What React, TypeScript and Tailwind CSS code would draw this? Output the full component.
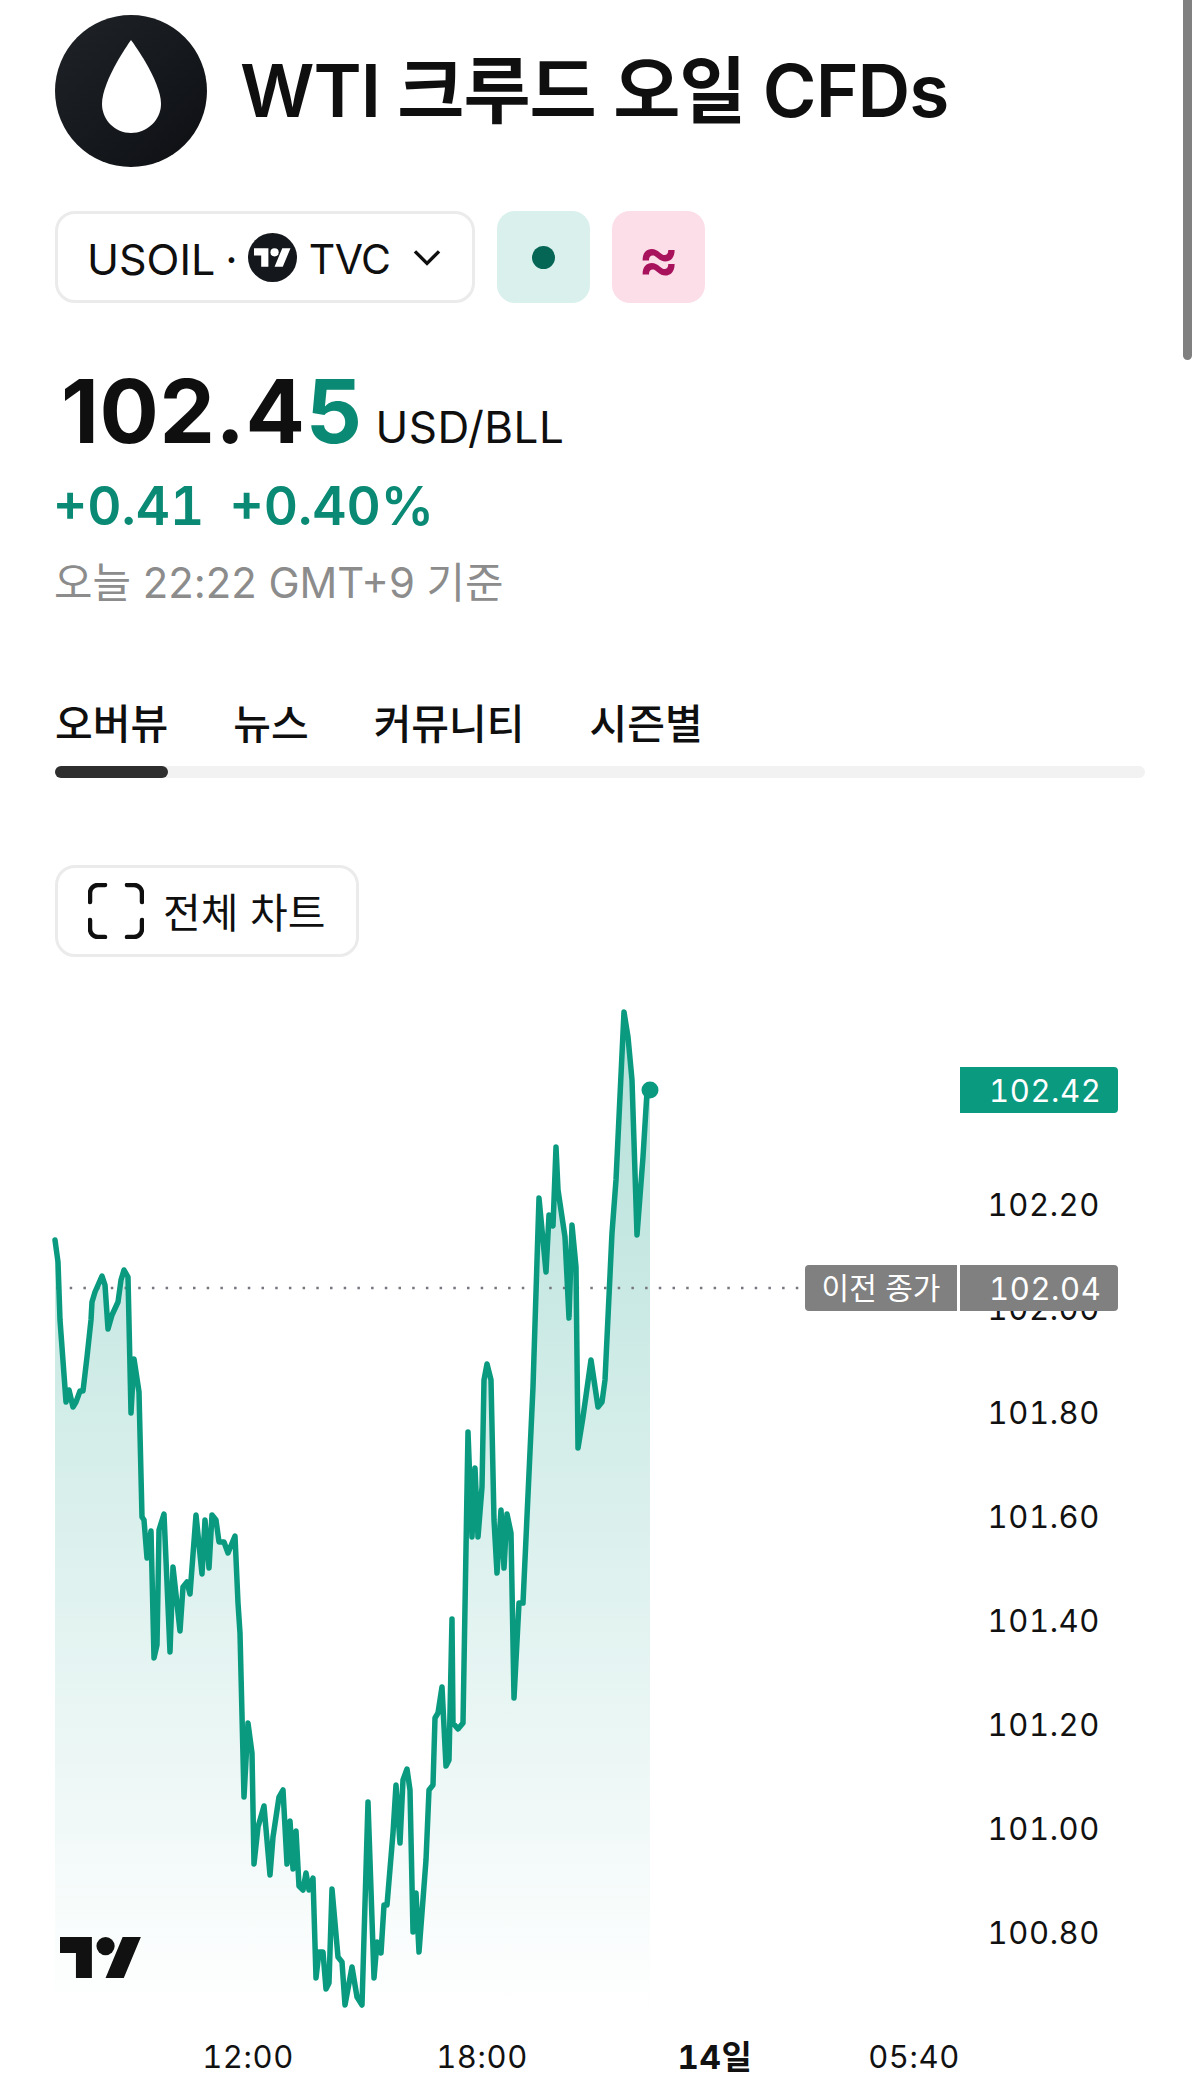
import React from "react";

const pts = "55,1240 58,1262 60,1320 66,1402 69,1390 73,1407 76,1402 80,1391 83,1391 87,1357 91,1320 92,1302 95,1292 102,1276 105,1285 108,1329 112,1315 118,1302 121,1280 124,1270 128,1277 131,1413 134,1359 139,1392 142,1517 144,1520 147,1558 151,1531 154,1658 157,1645 159,1530 164,1514 170,1652 173,1567 180,1631 183,1587 187,1582 190,1594 196,1515 202,1574 205,1520 209,1568 212,1515 216,1520 219,1542 224,1542 228,1553 235,1536 238,1603 240,1633 244,1797 248,1723 252,1753 254,1864 258,1827 264,1806 270,1875 273,1837 279,1797 283,1790 287,1864 290,1821 293,1869 296,1831 299,1886 303,1890 306,1873 309,1890 313,1878 316,1978 319,1952 323,1952 326,1989 329,1983 332,1889 338,1957 342,1962 345,2005 352,1967 357,1997 362,2005 368,1802 374,1978 377,1942 381,1953 384,1905 387,1905 393,1833 396,1785 400,1843 403,1780 407,1769 410,1790 413,1932 416,1893 419,1952 426,1860 429,1790 433,1785 435,1718 438,1713 442,1687 446,1766 449,1760 452,1619 453,1723 458,1729 463,1723 468,1432 472,1537 475,1468 478,1537 482,1487 484,1380 487,1364 491,1380 494,1520 497,1573 501,1510 504,1568 507,1514 511,1533 514,1698 519,1603 523,1603 533,1387 539,1198 546,1272 549,1215 553,1226 556,1147 558,1190 565,1237 569,1318 572,1225 576,1267 578,1448 583,1417 591,1360 598,1407 602,1402 605,1380 612,1233 616,1180 624,1012 628,1037 632,1080 637,1235 643,1157 647,1092 650,1090";

const ticks = ["102.20", "102.00", "101.80", "101.60", "101.40", "101.20", "101.00", "100.80"];
const font = { fontFamily: 'Inter, "Noto Sans CJK KR", "Liberation Sans", sans-serif' };

function TvMark({ className, fill }: { className: string; fill: string }) {
  return (
    <svg viewBox="0 4 36 18" className={className} fill={fill}>
      <path d="M14 22H7V11H0V4h14v18zM28 22h-8l7.5-18h8L28 22z" />
      <circle cx="20" cy="8" r="4" />
    </svg>
  );
}

export default function App() {
  return (
    <div className="relative w-[1200px] h-[2094px] overflow-hidden bg-white text-[#0f0f0f]" style={font}>
      <div className="absolute right-[8px] top-0 w-[9px] h-[360px] rounded-b-full bg-[#808080]" />

      <div className="px-[55px] pt-[15px] flex flex-col items-start">
        <div className="flex items-center gap-[33px]">
          <svg viewBox="0 0 152 152" className="w-[152px] h-[152px] shrink-0">
            <defs>
              <linearGradient id="lg" x1="0" y1="0" x2="1" y2="1">
                <stop offset="0" stopColor="#1f2327" />
                <stop offset="1" stopColor="#0d0f13" />
              </linearGradient>
            </defs>
            <circle cx="76" cy="76" r="76" fill="url(#lg)" />
            <path d="M76 25C76 25 47 65 47 89C47 105 60 118 76 118C92 118 106 105 106 89C106 65 76 25 76 25Z" fill="#fff" />
          </svg>
          <h1 className="text-[73px] leading-[88px] font-semibold tracking-[-1px] whitespace-nowrap">WTI 크루드 오일 CFDs</h1>
        </div>

        <div className="mt-[44px] flex gap-[22px]">
          <div className="w-[420px] h-[92px] rounded-[20px] border-[3px] border-[#ebebeb] flex items-center pl-[29px] text-[43px] leading-[50px]">
            <span className="pt-[3px]">USOIL</span>
            <span className="ml-[10px] pt-[3px]">·</span>
            <span className="ml-[10px] w-[49px] h-[49px] rounded-full bg-[#14171c] flex items-center justify-center">
              <TvMark className="w-[37px] h-[19px]" fill="#fff" />
            </span>
            <span className="ml-[12px] pt-[3px] text-[41px] tracking-[-0.5px]">TVC</span>
            <svg viewBox="0 0 24 24" className="ml-[19px] w-[34px] h-[34px]" fill="none" stroke="#0f0f0f" strokeWidth="2.4">
              <path d="M3.5 8l8.5 8.5L20.5 8" />
            </svg>
          </div>
          <div className="w-[93px] h-[92px] rounded-[18px] bg-[#d9f0ec] flex items-center justify-center">
            <div className="w-[23px] h-[23px] rounded-full bg-[#056656]" />
          </div>
          <div className="w-[93px] h-[92px] rounded-[18px] bg-[#fcdee9] flex items-center justify-center text-[62px] font-semibold text-[#a8125c]">≈</div>
        </div>

        <div className="mt-[56px] ml-[6px] flex items-baseline">
          <span className="text-[88px] leading-[104px] font-bold tracking-[0.6px]">102.4<span className="text-[#0a8a74]">5</span></span>
          <span className="ml-[13px] text-[44px] tracking-[0.5px]">USD/BLL</span>
        </div>
        <div className="mt-[11px] -ml-[2px] flex gap-[25px] text-[53px] leading-[64px] font-semibold tabular-nums text-[#0a8a74]">
          <span>+0.41</span>
          <span>+0.40%</span>
        </div>
        <div className="mt-[19px] -ml-[1px] text-[41.8px] leading-[52px] text-[#8c8c8c]">오늘 22:22 GMT+9 기준</div>

        <div className="mt-[87px] flex gap-[65px] text-[41px] leading-[56px] font-medium">
          <span>오버뷰</span>
          <span>뉴스</span>
          <span>커뮤니티</span>
          <span>시즌별</span>
        </div>
        <div className="mt-[14px] w-[1090px] h-[12px] rounded-full bg-[#f2f2f2]">
          <div className="w-[113px] h-[12px] rounded-full bg-[#2e2e2e]" />
        </div>

        <div className="mt-[87px] w-[304px] h-[92px] rounded-[20px] border-[3px] border-[#ebebeb] flex items-center pl-[30px] gap-[19px] text-[41px] leading-[50px]">
          <svg viewBox="0 0 56 56" className="w-[56px] h-[56px]" fill="none" stroke="#0f0f0f" strokeWidth="4.5" strokeLinecap="round">
            <path d="M2 19V10a8 8 0 0 1 8-8h7M39 2h7a8 8 0 0 1 8 8v9M54 37v9a8 8 0 0 1-8 8h-7M17 54h-7a8 8 0 0 1-8-8v-9" />
          </svg>
          <span className="pt-[3px]">전체 차트</span>
        </div>
      </div>

      <div className="absolute left-0 right-0 top-[1000px] h-[1094px]">
        <svg viewBox="0 1000 1200 1094" className="absolute inset-0 w-full h-full">
          <defs>
            <linearGradient id="area" x1="0" y1="1010" x2="0" y2="2015" gradientUnits="userSpaceOnUse">
              <stop offset="0" stopColor="#089981" stopOpacity="0.3" />
              <stop offset="1" stopColor="#089981" stopOpacity="0" />
            </linearGradient>
          </defs>
          <polygon points={`${pts} 650,2020 55,2020`} fill="url(#area)" />
          <line x1="56" y1="1288" x2="800" y2="1288" stroke="#77777f" strokeWidth="2.5" strokeDasharray="2.5 11.2" />
          <polyline points={pts} fill="none" stroke="#0a9a80" strokeWidth="5.5" strokeLinejoin="round" strokeLinecap="round" />
          <circle cx="650" cy="1090" r="8.5" fill="#0a9a80" />
        </svg>

        <TvMark className="absolute left-[60px] top-[937px] w-[82px] h-[41px]" fill="#111" />

        <div className="absolute right-[100px] top-[178px] flex flex-col items-end text-[31px] tracking-[0.6px] tabular-nums text-[#111]">
          {ticks.map((t) => (
            <div key={t} className="h-[104px] leading-[54px]">{t}</div>
          ))}
        </div>

        <div className="absolute left-[960px] top-[67px] w-[158px] h-[46px] rounded-r-[4px] bg-[#0a9a80] text-white text-[31px] leading-[48px] tracking-[0.6px] tabular-nums pl-[29px]">102.42</div>

        <div className="absolute left-[805px] top-[265px] flex gap-[3px] text-white text-[31px] leading-[48px]">
          <div className="w-[152px] h-[46px] rounded-l-[4px] bg-[#808080] text-center text-[30px] leading-[46px]">이전 종가</div>
          <div className="w-[158px] h-[46px] rounded-r-[4px] bg-[#808080] pl-[29px] tracking-[0.6px] tabular-nums">102.04</div>
        </div>

        <div className="absolute left-[148px] top-[1036px] flex text-[31px] leading-[42px] tracking-[0.6px] tabular-nums text-[#111]">
          <div className="w-[200px] text-center">12:00</div>
          <div className="ml-[34px] w-[200px] text-center">18:00</div>
          <div className="ml-[33px] w-[200px] text-center font-bold text-[33px]">14일</div>
          <div className="ml-[-1px] w-[200px] text-center">05:40</div>
        </div>
      </div>
    </div>
  );
}
